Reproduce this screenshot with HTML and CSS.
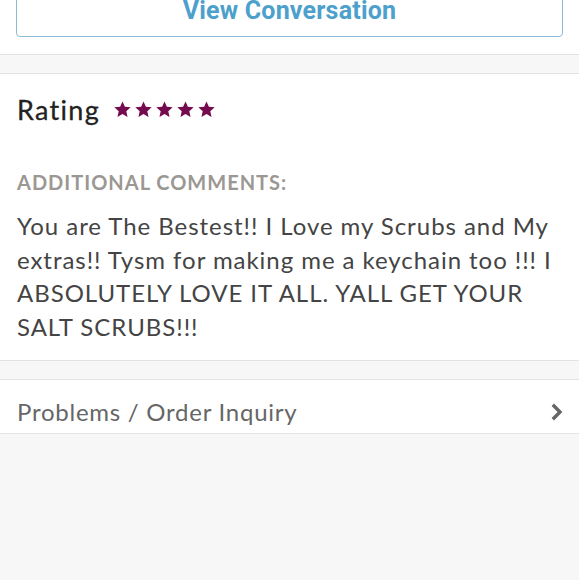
FILE: index.html
```html
<!DOCTYPE html>
<html lang="en">
<head>
  <meta charset="UTF-8">
  <meta name="viewport" content="width=device-width, initial-scale=1.0">
  <title>Order</title>
  <link rel="stylesheet" href="styles.css">
</head>
<body>
  <div class="conv">
    <a href="javascript:;" class="conv-btn">View Conversation</a>
  </div>

  <div class="review">
    <h2 class="rating">Rating
      <span class="stars">
        <svg viewBox="0 0 20 20"><path d="M10 1.5l2.5 5.6 6.1.6-4.6 4.1 1.3 6-5.3-3.1-5.3 3.1 1.3-6L1.4 7.7l6.1-.6z"/></svg>
        <svg viewBox="0 0 20 20"><path d="M10 1.5l2.5 5.6 6.1.6-4.6 4.1 1.3 6-5.3-3.1-5.3 3.1 1.3-6L1.4 7.7l6.1-.6z"/></svg>
        <svg viewBox="0 0 20 20"><path d="M10 1.5l2.5 5.6 6.1.6-4.6 4.1 1.3 6-5.3-3.1-5.3 3.1 1.3-6L1.4 7.7l6.1-.6z"/></svg>
        <svg viewBox="0 0 20 20"><path d="M10 1.5l2.5 5.6 6.1.6-4.6 4.1 1.3 6-5.3-3.1-5.3 3.1 1.3-6L1.4 7.7l6.1-.6z"/></svg>
        <svg viewBox="0 0 20 20"><path d="M10 1.5l2.5 5.6 6.1.6-4.6 4.1 1.3 6-5.3-3.1-5.3 3.1 1.3-6L1.4 7.7l6.1-.6z"/></svg>
      </span>
    </h2>
    <h3 class="label">Additional comments:</h3>
    <p class="comment">You are The Bestest!! I Love my Scrubs and My extras!! Tysm for making me a keychain too !!! I ABSOLUTELY LOVE IT ALL. YALL GET YOUR SALT SCRUBS!!!</p>
  </div>

  <a href="javascript:;" class="row">
    <span>Problems / Order Inquiry</span>
    <svg class="chev" viewBox="0 0 13 20"><path d="M2.8 2.8l7.2 7.2-7.2 7.2" fill="none" stroke="currentColor" stroke-width="3.4"/></svg>
  </a>
</body>
</html>
```

FILE: styles.css
```css
*{
  padding: 0;
  margin: 0;
  box-sizing: border-box;
}
body{
  background-color: #f7f7f7;
  font-family: Lato, "Liberation Sans", sans-serif;
  overflow: hidden;
}
a{
  text-decoration: none;
}
.conv{
  background-color: #fff;
  padding: 0 16px 17px;
  border-bottom: 1px solid #e3e3e3;
}
.conv-btn{
  display: block;
  margin-top: -14px;
  height: 51px;
  line-height: 47px;
  border: 1px solid #8dbbd6;
  border-radius: 4px;
  text-align: center;
  color: #4d9fcc;
  font-family: Roboto, sans-serif;
  font-weight: 700;
  font-size: 25px;
  letter-spacing: .2px;
}
.review{
  margin-top: 18px;
  background-color: #fff;
  border-top: 1px solid #e3e3e3;
  border-bottom: 1px solid #e3e3e3;
  padding: 20px 17px 17px;
}
.rating{
  display: flex;
  align-items: center;
  gap: 13px;
  font-size: 27px;
  font-weight: 400;
  color: #222;
  line-height: 32px;
  letter-spacing: 1.3px;
  -webkit-text-stroke: .3px #222;
}
.stars{
  display: flex;
  gap: 2px;
  margin-top: -2px;
}
.stars svg{
  width: 19px;
  height: 19px;
  fill: #740b4f;
}
.label{
  margin-top: 44px;
  font-size: 20px;
  font-weight: 700;
  text-transform: uppercase;
  color: #9b9793;
  letter-spacing: 1px;
  line-height: 24px;
}
.comment{
  margin-top: 15px;
  font-size: 24px;
  line-height: 33.5px;
  color: #444;
  letter-spacing: .95px;
}
.row{
  display: flex;
  align-items: center;
  justify-content: space-between;
  margin-top: 18px;
  height: 55px;
  padding: 10px 16px 0 17px;
  background-color: #fff;
  border-top: 1px solid #e3e3e3;
  border-bottom: 1px solid #e3e3e3;
  color: #666;
  font-size: 24px;
  letter-spacing: .75px;
}
.chev{
  width: 13px;
  height: 20px;
  color: #666;
}
```
